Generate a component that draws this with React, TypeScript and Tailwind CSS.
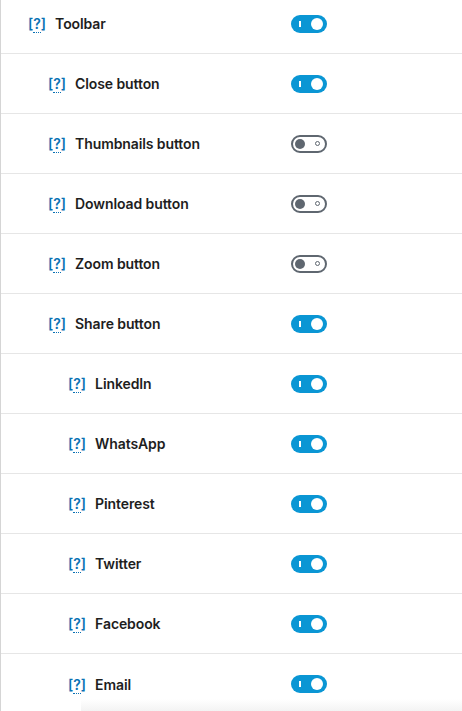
import React from "react"

type Item = { label: string; level: number; on: boolean }

const items: Item[] = [
  { label: "Toolbar", level: 0, on: true },
  { label: "Close button", level: 1, on: true },
  { label: "Thumbnails button", level: 1, on: false },
  { label: "Download button", level: 1, on: false },
  { label: "Zoom button", level: 1, on: false },
  { label: "Share button", level: 1, on: true },
  { label: "LinkedIn", level: 2, on: true },
  { label: "WhatsApp", level: 2, on: true },
  { label: "Pinterest", level: 2, on: true },
  { label: "Twitter", level: 2, on: true },
  { label: "Facebook", level: 2, on: true },
  { label: "Email", level: 2, on: true },
]

const indent = ["pl-[27px]", "pl-[47px]", "pl-[67px]"]

function Toggle({ on }: { on: boolean }) {
  if (on) {
    return (
      <div className="flex h-[18px] w-[36px] items-center justify-between rounded-full bg-[#0a96d4] pl-[8px] pr-[4px]">
        <span className="h-[6px] w-[2px] bg-white" />
        <span className="h-[12px] w-[12px] rounded-full bg-white" />
      </div>
    )
  }
  return (
    <div className="flex h-[18px] w-[36px] items-center justify-between rounded-full border-2 border-[#5f6770] bg-white pl-[2px] pr-[5px]">
      <span className="h-[10px] w-[10px] rounded-full bg-[#5f6770]" />
      <span className="h-[5px] w-[5px] rounded-full border border-[#5f6770]" />
    </div>
  )
}

export default function App() {
  return (
    <div
      className="relative h-[711px] w-[462px] overflow-hidden border-l border-[#d5d5d5] bg-white"
      style={{ fontFamily: "Inter, 'Liberation Sans', sans-serif" }}
    >
      <div className="-mt-[6px]">
        {items.map((item, i) => (
          <div
            key={item.label}
            className={`flex h-[60px] items-center ${i < items.length - 1 ? "border-b border-[#e6e6e6]" : ""}`}
          >
            <div className={`flex w-[290px] items-center gap-[9px] ${indent[item.level]}`}>
              <span className="text-[14px] font-semibold text-[#0a72b4]">
                [<span className="border-b border-dotted border-[#0a72b4]">?</span>]
              </span>
              <span className="text-[14px] font-semibold tracking-[-0.1px] text-[#1e1e1e]">{item.label}</span>
            </div>
            <Toggle on={item.on} />
          </div>
        ))}
      </div>
      <div className="pointer-events-none absolute bottom-0 left-[80px] right-0 h-[12px] bg-gradient-to-t from-[#f3f3f3] to-transparent" />
    </div>
  )
}
